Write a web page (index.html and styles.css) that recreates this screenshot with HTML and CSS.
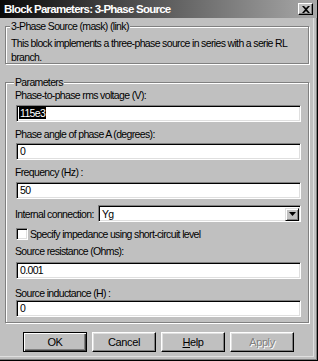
FILE: index.html
```html
<!DOCTYPE html>
<html>
<head>
<meta charset="utf-8">
<link rel="stylesheet" href="styles.css">
</head>
<body>
<div class="window">
  <div class="titlebar">
    <span class="title">Block Parameters: 3-Phase Source</span>
    <span class="close"><svg width="8" height="7" viewBox="0 0 8 7"><path d="M0 0h2l2 2 2-2h2L5 3.5 8 7H6L4 5 2 7H0l3-3.5z" fill="#000"/></svg></span>
  </div>
  <div class="body">
    <div class="group group-desc">
      <span class="legend legend-desc">3-Phase Source (mask) (link)</span>
      <p class="desc">This block implements a three-phase source in series with a serie RL branch.</p>
    </div>
    <div class="group group-params">
      <span class="legend legend-params">Parameters</span>
      <div class="lbl l1">Phase-to-phase rms voltage (V):</div>
      <div class="field f1"><span class="sel">115e3</span></div>
      <div class="lbl l2">Phase angle of phase A (degrees):</div>
      <div class="field f2">0</div>
      <div class="lbl l3">Frequency (Hz) :</div>
      <div class="field f3">50</div>
      <div class="combo-row">
        <span class="combo-label">Internal connection:</span>
        <div class="combo">
          <span class="combo-val">Yg</span>
          <span class="drop"><svg width="7" height="4" viewBox="0 0 7 4"><path d="M0 0h7L3.5 4z" fill="#000"/></svg></span>
        </div>
      </div>
      <div class="check-row">
        <span class="checkbox"></span>
        <span class="check-label">Specify impedance using short-circuit level</span>
      </div>
      <div class="lbl l5">Source resistance (Ohms):</div>
      <div class="field f5">0.001</div>
      <div class="lbl l6">Source inductance (H) :</div>
      <div class="field f6">0</div>
    </div>
    <div class="buttons">
      <button class="btn btn-default">OK</button>
      <button class="btn">Cancel</button>
      <button class="btn"><u>H</u>elp</button>
      <button class="btn btn-disabled">Apply</button>
    </div>
  </div>
</div>
</body>
</html>
```
FILE: styles.css
```css
html, body {
  margin: 0;
  padding: 0;
  background: #c0c0c0;
}
.window {
  width: 318px;
  height: 361px;
  box-sizing: border-box;
  background: #c0c0c0;
  font-family: "Liberation Sans", Arial, sans-serif;
  font-size: 10.5px;
  letter-spacing: -0.65px;
  color: #000;
  border-right: 1px solid #000;
  border-bottom: 1px solid #000;
  box-shadow: inset -1px -1px 0 #808080, inset -3px -3px 0 #c0c0c0, inset -4px -4px 0 #dfdfdf;
  overflow: hidden;
}
.titlebar {
  height: 18px;
  display: flex;
  align-items: center;
  justify-content: space-between;
  padding: 0 3px 0 4px;
  background: linear-gradient(90deg, #0a0a0a 0%, #4a4a4a 40%, #a8a8a8 100%);
}
.title {
  color: #fff;
  font-weight: bold;
  font-size: 11.5px;
  letter-spacing: -0.75px;
}
.close {
  width: 15px;
  height: 12px;
  box-sizing: border-box;
  background: #c0c0c0;
  border: 1px solid;
  border-color: #fff #000 #000 #fff;
  box-shadow: inset -1px -1px 0 #808080;
  display: flex;
  align-items: center;
  justify-content: center;
  margin-right: 1px;
}
.body {
  padding: 8px 8px 0 5px;
}
.group {
  position: relative;
  box-sizing: border-box;
  border: 1px solid #808080;
  box-shadow: inset 1px 1px 0 #fff, 1px 1px 0 #fff;
}
.legend {
  position: absolute;
  top: -7px;
  background: #c0c0c0;
  padding: 0 1px;
  line-height: 13px;
  white-space: nowrap;
}
.legend-desc { left: 4px; }
.legend-params { left: 8px; }
.group-desc {
  width: 304px;
  height: 38px;
  padding: 9px 4px 0 5px;
}
.desc {
  margin: 0;
  line-height: 14px;
}
.group-params {
  width: 304px;
  height: 241px;
  margin-top: 18px;
  padding: 0 7px 0 9px;
  display: flex;
  flex-direction: column;
}
.lbl {
  line-height: 13px;
  height: 13px;
  white-space: nowrap;
}
.l1 { margin-top: 6px; }
.l2, .l3 { margin-top: 6px; }
.l5 { margin-top: 5px; }
.l6 { margin-top: 8px; }
.field {
  box-sizing: border-box;
  width: 285px;
  height: 17px;
  flex: none;
  margin-left: 1px;
  background: #fff;
  border: 1px solid;
  border-color: #808080 #fff #fff #808080;
  box-shadow: inset 1px 1px 0 #000, inset -1px -1px 0 #dfdfdf;
  padding: 0 0 0 3px;
  line-height: 15px;
}
.f1 { margin-top: 3px; padding-left: 2px; }
.f2 { margin-top: 2px; }
.f3 { margin-top: 3px; }
.f5 { margin-top: 4px; }
.f6 { margin-top: 0; }
.sel {
  background: #000;
  color: #fff;
  padding: 0 1px;
  display: inline-block;
  line-height: 12px;
  vertical-align: middle;
  margin-top: -2px;
}
.combo-row {
  margin-top: 6px;
  display: flex;
  align-items: center;
  flex: none;
}
.combo-label {
  width: 83px;
  flex: none;
  white-space: nowrap;
}
.combo {
  box-sizing: border-box;
  width: 203px;
  height: 17px;
  flex: none;
  background: #fff;
  border: 1px solid;
  border-color: #808080 #fff #fff #808080;
  box-shadow: inset 1px 1px 0 #000, inset -1px -1px 0 #dfdfdf;
  display: flex;
  align-items: center;
  justify-content: space-between;
  padding: 2px 1px 1px 3px;
}
.combo-val {
  line-height: 13px;
}
.drop {
  width: 14px;
  height: 13px;
  box-sizing: border-box;
  background: #c0c0c0;
  border: 1px solid;
  border-color: #dfdfdf #000 #000 #dfdfdf;
  box-shadow: inset 1px 1px 0 #fff, inset -1px -1px 0 #808080;
  display: flex;
  align-items: center;
  justify-content: center;
}
.check-row {
  margin-top: 5px;
  display: flex;
  align-items: center;
  height: 13px;
  flex: none;
}
.checkbox {
  box-sizing: border-box;
  width: 12px;
  height: 12px;
  flex: none;
  margin-left: 1px;
  background: #fff;
  border: 1px solid;
  border-color: #808080 #fff #fff #808080;
  box-shadow: inset 1px 1px 0 #000, inset -1px -1px 0 #dfdfdf;
}
.check-label {
  margin-left: 2px;
  white-space: nowrap;
}
.buttons {
  margin-top: 9px;
  padding-left: 18px;
  display: flex;
  gap: 5px;
}
.btn {
  box-sizing: border-box;
  width: 64px;
  height: 20px;
  margin: 0;
  padding: 0;
  font: inherit;
  font-size: 11px;
  letter-spacing: -0.4px;
  color: #000;
  background: #c0c0c0;
  border: 1px solid;
  border-color: #fff #000 #000 #fff;
  box-shadow: inset -1px -1px 0 #808080, inset 1px 1px 0 #dfdfdf;
}
.btn-default {
  border: 1px solid #000;
  box-shadow: inset 1px 1px 0 #fff, inset -1px -1px 0 #404040, inset -2px -2px 0 #808080;
}
.btn-disabled {
  color: #808080;
  text-shadow: 1px 1px 0 #fff;
}
```
